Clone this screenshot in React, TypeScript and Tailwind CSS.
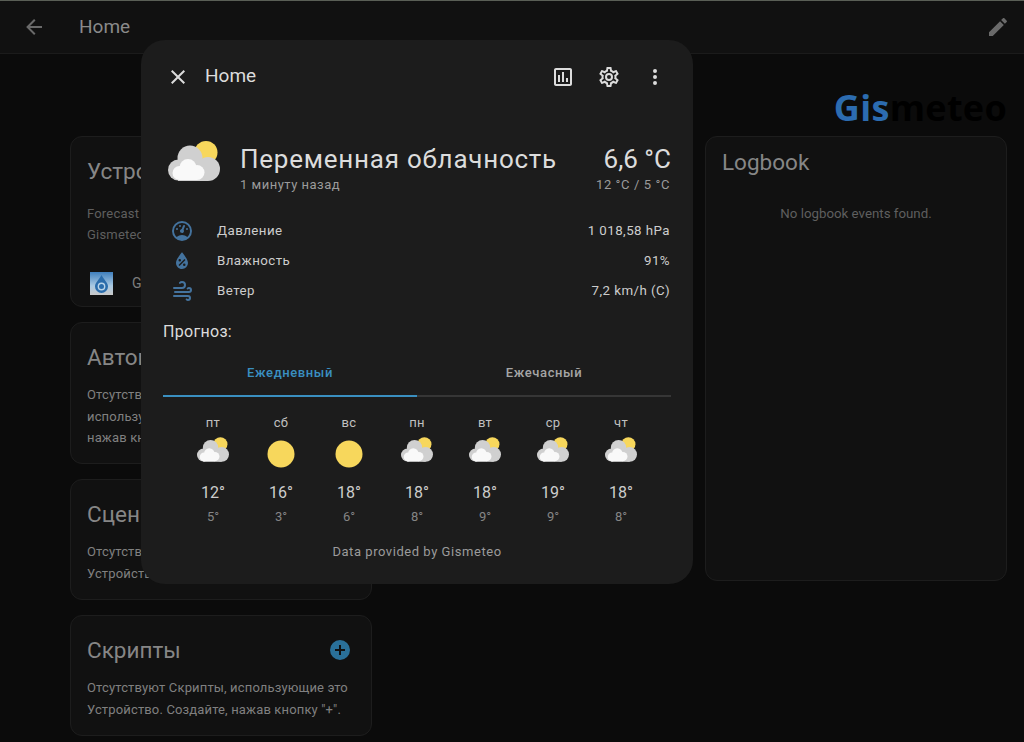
import type { ReactNode } from 'react'

const mdi = {
  arrowLeft: 'M20,11V13H8L13.5,18.5L12.08,19.92L4.16,12L12.08,4.08L13.5,5.5L8,11H20Z',
  pencil: 'M20.71,7.04C21.1,6.65 21.1,6 20.71,5.63L18.37,3.29C18,2.9 17.35,2.9 16.96,3.29L15.12,5.12L18.87,8.87M3,17.25V21H6.75L17.81,9.93L14.06,6.18L3,17.25Z',
  close: 'M19,6.41L17.59,5L12,10.59L6.41,5L5,6.41L10.59,12L5,17.59L6.41,19L12,13.41L17.59,19L19,17.59L13.41,12L19,6.41Z',
  chart: 'M9 17H7V10H9V17M13 17H11V7H13V17M17 17H15V13H17V17M19 19H5V5H19V19.1M19 3H5C3.9 3 3 3.9 3 5V19C3 20.1 3.9 21 5 21H19C20.1 21 21 20.1 21 19V5C21 3.9 20.1 3 19 3Z',
  cog: 'M12,8A4,4 0 0,1 16,12A4,4 0 0,1 12,16A4,4 0 0,1 8,12A4,4 0 0,1 12,8M12,10A2,2 0 0,0 10,12A2,2 0 0,0 12,14A2,2 0 0,0 14,12A2,2 0 0,0 12,10M10,22C9.75,22 9.54,21.82 9.5,21.58L9.13,18.93C8.5,18.68 7.96,18.34 7.44,17.94L4.95,18.95C4.73,19.03 4.46,18.95 4.34,18.73L2.34,15.27C2.21,15.05 2.27,14.78 2.46,14.63L4.57,12.97L4.5,12L4.57,11L2.46,9.37C2.27,9.22 2.21,8.95 2.34,8.73L4.34,5.27C4.46,5.05 4.73,4.96 4.95,5.05L7.44,6.05C7.96,5.66 8.5,5.32 9.13,5.07L9.5,2.42C9.54,2.18 9.75,2 10,2H14C14.25,2 14.46,2.18 14.5,2.42L14.87,5.07C15.5,5.32 16.04,5.66 16.56,6.05L19.05,5.05C19.27,4.96 19.54,5.05 19.66,5.27L21.66,8.73C21.79,8.95 21.73,9.22 21.54,9.37L19.43,11L19.5,12L19.43,13L21.54,14.63C21.73,14.78 21.79,15.05 21.66,15.27L19.66,18.73C19.54,18.95 19.27,19.04 19.05,18.95L16.56,17.95C16.04,18.34 15.5,18.68 14.87,18.93L14.5,21.58C14.46,21.82 14.25,22 14,22H10M11.25,4L10.88,6.61C9.68,6.86 8.62,7.5 7.85,8.39L5.44,7.35L4.69,8.65L6.8,10.2C6.4,11.37 6.4,12.64 6.8,13.8L4.68,15.36L5.43,16.66L7.86,15.62C8.63,16.5 9.68,17.14 10.87,17.38L11.24,20H12.76L13.13,17.39C14.32,17.14 15.37,16.5 16.14,15.62L18.57,16.66L19.32,15.36L17.2,13.81C17.6,12.64 17.6,11.37 17.2,10.2L19.31,8.65L18.56,7.35L16.15,8.39C15.38,7.5 14.32,6.86 13.12,6.62L12.75,4H11.25Z',
  dots: 'M12,16A2,2 0 0,1 14,18A2,2 0 0,1 12,20A2,2 0 0,1 10,18A2,2 0 0,1 12,16M12,10A2,2 0 0,1 14,12A2,2 0 0,1 12,14A2,2 0 0,1 10,12A2,2 0 0,1 12,10M12,4A2,2 0 0,1 14,6A2,2 0 0,1 12,8A2,2 0 0,1 10,6A2,2 0 0,1 12,4Z',
  gauge: 'M12,2A10,10 0 0,0 2,12A10,10 0 0,0 12,22A10,10 0 0,0 22,12A10,10 0 0,0 12,2M12,4A8,8 0 0,1 20,12C20,14.4 19,16.5 17.3,18C15.9,16.7 14,16 12,16C10,16 8.2,16.7 6.7,18C5,16.5 4,14.4 4,12A8,8 0 0,1 12,4M14,5.89C13.62,5.9 13.26,6.15 13.1,6.54L11.81,9.77L11.71,10C11,10.13 10.41,10.6 10.14,11.26C9.73,12.29 10.23,13.45 11.26,13.86C12.29,14.27 13.45,13.77 13.86,12.74C14.12,12.08 14,11.32 13.57,10.76L13.67,10.5L14.96,7.29L14.97,7.26C15.17,6.75 14.92,6.17 14.41,5.96C14.28,5.91 14.15,5.89 14,5.89M10,6A1,1 0 0,0 9,7A1,1 0 0,0 10,8A1,1 0 0,0 11,7A1,1 0 0,0 10,6M7,9A1,1 0 0,0 6,10A1,1 0 0,0 7,11A1,1 0 0,0 8,10A1,1 0 0,0 7,9M17,9A1,1 0 0,0 16,10A1,1 0 0,0 17,11A1,1 0 0,0 18,10A1,1 0 0,0 17,9Z',
  water: 'M12,3.25C12,3.25 6,10 6,14C6,17.32 8.69,20 12,20A6,6 0 0,0 18,14C18,10 12,3.25 12,3.25M14.47,9.97L15.53,11.03L9.53,17.03L8.47,15.97M9.75,10A1.25,1.25 0 0,1 11,11.25A1.25,1.25 0 0,1 9.75,12.5A1.25,1.25 0 0,1 8.5,11.25A1.25,1.25 0 0,1 9.75,10M14.25,14.5A1.25,1.25 0 0,1 15.5,15.75A1.25,1.25 0 0,1 14.25,17A1.25,1.25 0 0,1 13,15.75A1.25,1.25 0 0,1 14.25,14.5Z',
  windy: 'M4,10A1,1 0 0,1 3,9A1,1 0 0,1 4,8H12A2,2 0 0,0 14,6A2,2 0 0,0 12,4C11.45,4 10.95,4.22 10.59,4.59C10.2,5 9.56,5 9.17,4.59C8.78,4.2 8.78,3.56 9.17,3.17C9.9,2.45 10.9,2 12,2A4,4 0 0,1 16,6A4,4 0 0,1 12,10H4M19,12A1,1 0 0,0 20,11A1,1 0 0,0 19,10C18.72,10 18.47,10.11 18.29,10.29C17.9,10.68 17.27,10.68 16.88,10.29C16.5,9.9 16.5,9.27 16.88,8.88C17.42,8.34 18.17,8 19,8A3,3 0 0,1 22,11A3,3 0 0,1 19,14H5A1,1 0 0,1 4,13A1,1 0 0,1 5,12H19M18,18H4A1,1 0 0,1 3,17A1,1 0 0,1 4,16H18A3,3 0 0,1 21,19A3,3 0 0,1 18,22C17.17,22 16.42,21.66 15.88,21.12C15.5,20.73 15.5,20.1 15.88,19.71C16.27,19.32 16.9,19.32 17.29,19.71C17.47,19.89 17.72,20 18,20A1,1 0 0,0 19,19A1,1 0 0,0 18,18Z',
  plus: 'M17,13H13V17H11V13H7V11H11V7H13V11H17M12,2A10,10 0 0,0 2,12A10,10 0 0,0 12,22A10,10 0 0,0 22,12A10,10 0 0,0 12,2Z',
}

function Icon({ d, className }: { d: string; className?: string }) {
  return (
    <svg viewBox="0 0 24 24" fill="currentColor" className={className}>
      <path d={d} />
    </svg>
  )
}

function PartlyCloudy({ className }: { className?: string }) {
  return (
    <svg viewBox="0 0 52 40" className={className}>
      <circle cx="38" cy="11.500" r="11.500" fill="#f7d75c" />
      <g fill="#d0d0d0">
        <circle cx="10.500" cy="29" r="10.500" />
        <circle cx="22" cy="17" r="12.500" />
        <circle cx="40" cy="28" r="12" />
        <rect x="10" y="22" width="30" height="18" />
      </g>
      <g fill="#f9f9f9">
        <circle cx="11.500" cy="32" r="7" />
        <circle cx="20" cy="26.500" r="8.500" />
        <circle cx="29" cy="31.500" r="7.500" />
        <rect x="11" y="30" width="18" height="9" />
      </g>
    </svg>
  )
}

function Sun({ className }: { className?: string }) {
  return (
    <svg viewBox="0 0 28 28" className={className}>
      <circle cx="14" cy="14" r="13.500" fill="#f7d75c" />
    </svg>
  )
}

function Card({ title, children, className, action }: { title: string; children?: ReactNode; className?: string; action?: ReactNode }) {
  return (
    <div className={`rounded-xl border border-[#1d1d1d] bg-[#111111] px-4 pt-[18px] ${className ?? ''}`}>
      <div className="flex h-8 items-center justify-between pr-[3px]">
        <h2 className="text-[22.5px] leading-8 text-[#868686] whitespace-nowrap">{title}</h2>
        {action}
      </div>
      {children}
    </div>
  )
}

const bodyText = 'mt-[11px] text-[13px] leading-[21.500px] tracking-[0.15px] text-[#808080] whitespace-nowrap'

const rows = [
  { icon: mdi.gauge, label: 'Давление', value: '1 018,58 hPa' },
  { icon: mdi.water, label: 'Влажность', value: '91%' },
  { icon: mdi.windy, label: 'Ветер', value: '7,2 km/h (C)' },
]

const days = [
  { day: 'пт', sun: false, hi: 12, lo: 5 },
  { day: 'сб', sun: true, hi: 16, lo: 3 },
  { day: 'вс', sun: true, hi: 18, lo: 6 },
  { day: 'пн', sun: false, hi: 18, lo: 8 },
  { day: 'вт', sun: false, hi: 18, lo: 9 },
  { day: 'ср', sun: false, hi: 19, lo: 9 },
  { day: 'чт', sun: false, hi: 18, lo: 8 },
]

export default function App() {
  return (
    <div className="relative h-[742px] w-[1024px] overflow-hidden bg-[#0b0b0b] font-['Roboto',sans-serif]">
      {/* top bar */}
      <header className="flex h-[54px] items-center justify-between border-b border-[#1b1b1b] border-t border-t-[#5a5f56] bg-[#111111] pl-[22px] pr-[14px]">
        <div className="flex items-center">
          <Icon d={mdi.arrowLeft} className="h-6 w-6 text-[#6a6a6a]" />
          <span className="ml-[33px] text-[19px] text-[#8a8a8a]">Home</span>
        </div>
        <Icon d={mdi.pencil} className="h-6 w-6 text-[#6a6a6a]" />
      </header>

      <main className="flex gap-4 pl-[70px] pr-[17px]">
        <div className="flex w-[302px] shrink-0 flex-col gap-[15px] pt-[82px]">
          <Card title="Устройство" className="h-[171px]">
            <p className="mt-[16px] text-[13px] leading-[21px] tracking-[0.2px] text-[#5f5f5f] whitespace-nowrap">
              Forecast<br />Gismeteo
            </p>
            <div className="mt-[27px] ml-[3px] flex items-center gap-[19px]">
              <svg viewBox="0 0 23 23" className="h-[23px] w-[23px]">
                <defs>
                  <linearGradient id="dev" x1="0" y1="0" x2="0" y2="1">
                    <stop offset="0" stopColor="#3f7fbd" />
                    <stop offset="0.6" stopColor="#a9c9e2" />
                    <stop offset="1" stopColor="#c9c9c9" />
                  </linearGradient>
                </defs>
                <rect width="23" height="23" fill="url(#dev)" />
                <path d="M11.500 3C9 8 5 10.500 5 14.500a6.500 6.500 0 0 0 13 0C18 10.500 14 8 11.500 3Z" fill="#2a6cab" />
                <circle cx="11.500" cy="14.500" r="3.200" fill="none" stroke="#b7d3e8" strokeWidth="1.400" />
              </svg>
              <span className="text-[14px] text-[#7d7d7d]">Gismeteo</span>
            </div>
          </Card>
          <Card title="Автоматизации" className="h-[142px]">
            <p className={bodyText}>
              Отсутствуют Автоматизации,<br />использующие это Устройство.<br />нажав кнопку "+".
            </p>
          </Card>
          <Card title="Сцены" className="h-[121px]">
            <p className={bodyText}>
              Отсутствуют Сцены, использующие это<br />Устройство. Создайте, нажав кнопку "+".
            </p>
          </Card>
          <Card
            title="Скрипты"
            className="h-[121px]"
            action={<Icon d={mdi.plus} className="h-6 w-6 text-[#2a7099]" />}
          >
            <p className={bodyText}>
              Отсутствуют Скрипты, использующие это<br />Устройство. Создайте, нажав кнопку "+".
            </p>
          </Card>
        </div>

        {/* middle column is empty, the dialog sits over it */}
        <div className="w-[301px] shrink-0" />

        <div className="flex-1">
          <div className="flex h-[82px] items-end justify-end pb-[8px]">
            <span className="font-['Open_Sans',sans-serif] text-[36px] leading-[40px] font-bold tracking-[0.3px]">
              <span className="text-[#2c6cb0]">Gis</span>
              <span className="text-[#000000]">meteo</span>
            </span>
          </div>
          <div className="h-[445px] rounded-xl border border-[#1d1d1d] bg-[#111111] px-4 pt-[9px]">
            <h2 className="text-[22.500px] leading-8 text-[#868686]">Logbook</h2>
            <p className="mt-[26px] text-center text-[13.300px] text-[#5f5f5f]">No logbook events found.</p>
          </div>
        </div>
      </main>

      {/* more-info dialog */}
      <div className="absolute left-[141px] top-[40px] h-[544px] w-[552px] rounded-[24px] bg-[#1c1c1c] px-[22px]">
        <div className="flex h-[74px] items-center text-[#dcdcdc]">
          <Icon d={mdi.close} className="ml-[3px] h-6 w-6" />
          <span className="ml-[15px] -mt-[2px] text-[19px]">Home</span>
          <div className="ml-auto flex items-center gap-[22px] pr-[4px]">
            <Icon d={mdi.chart} className="h-6 w-6" />
            <Icon d={mdi.cog} className="h-6 w-6" />
            <Icon d={mdi.dots} className="h-6 w-6" />
          </div>
        </div>

        <div className="mt-[27px] flex items-center pr-[1px]">
          <PartlyCloudy className="mb-[12px] ml-[5px] h-[40px] w-[52px]" />
          <div className="ml-[20px]">
            <div className="text-[26px] leading-[36px] tracking-[0.75px] text-[#dcdcdc] whitespace-nowrap">Переменная облачность</div>
            <div className="text-[13px] leading-[16px] tracking-[0.5px] text-[#9b9b9b]">1 минуту назад</div>
          </div>
          <div className="ml-auto text-right">
            <div className="-mr-[1px] text-[26px] leading-[36px] text-[#dcdcdc]">6,6 °C</div>
            <div className="text-[13px] leading-[16px] tracking-[0.6px] text-[#9b9b9b]">12 °C / 5 °C</div>
          </div>
        </div>

        <div className="mt-[23px] pr-[1px]">
          {rows.map(r => (
            <div key={r.label} className="flex h-[30px] items-center text-[13.300px] tracking-[0.45px] text-[#cdcdcd]">
              <Icon d={r.icon} className="ml-[7px] h-6 w-6 text-[#44739e]" />
              <span className="ml-[23px]">{r.label}</span>
              <span className="ml-auto">{r.value}</span>
            </div>
          ))}
        </div>

        <div className="mt-[14px] text-[16px] leading-[24px] tracking-[0.3px] text-[#dcdcdc]">Прогноз:</div>

        <div className="mt-[6px] flex h-[47px] border-b-2 border-[#363636] text-[13px] font-medium tracking-[0.6px]">
          <div className="-mb-[2px] flex flex-1 items-center justify-center border-b-2 border-[#3a8fc0] text-[#3a8fc0]">Ежедневный</div>
          <div className="flex flex-1 items-center justify-center text-[#a5a5a5]">Ежечасный</div>
        </div>

        <div className="mt-[16px] flex justify-center">
          {days.map(d => (
            <div key={d.day} className="flex w-[68px] flex-col items-center">
              <div className="text-[13px] leading-[20px] tracking-[0.3px] text-[#c0c0c0]">{d.day}</div>
              <div className="mt-[3px] flex h-[36px] items-center justify-center">
                {d.sun ? <Sun className="h-[28px] w-[28px]" /> : <PartlyCloudy className="mb-[10px] h-[25px] w-[32px]" />}
              </div>
              <div className="mt-[9px] text-[16px] leading-[24px] text-[#cdcdcd]">{d.hi}°</div>
              <div className="text-[13px] leading-[24px] text-[#858585]">{d.lo}°</div>
            </div>
          ))}
        </div>

        <div className="mt-[13px] text-center text-[13px] tracking-[0.55px] text-[#9b9b9b]">Data provided by Gismeteo</div>
      </div>
    </div>
  )
}
